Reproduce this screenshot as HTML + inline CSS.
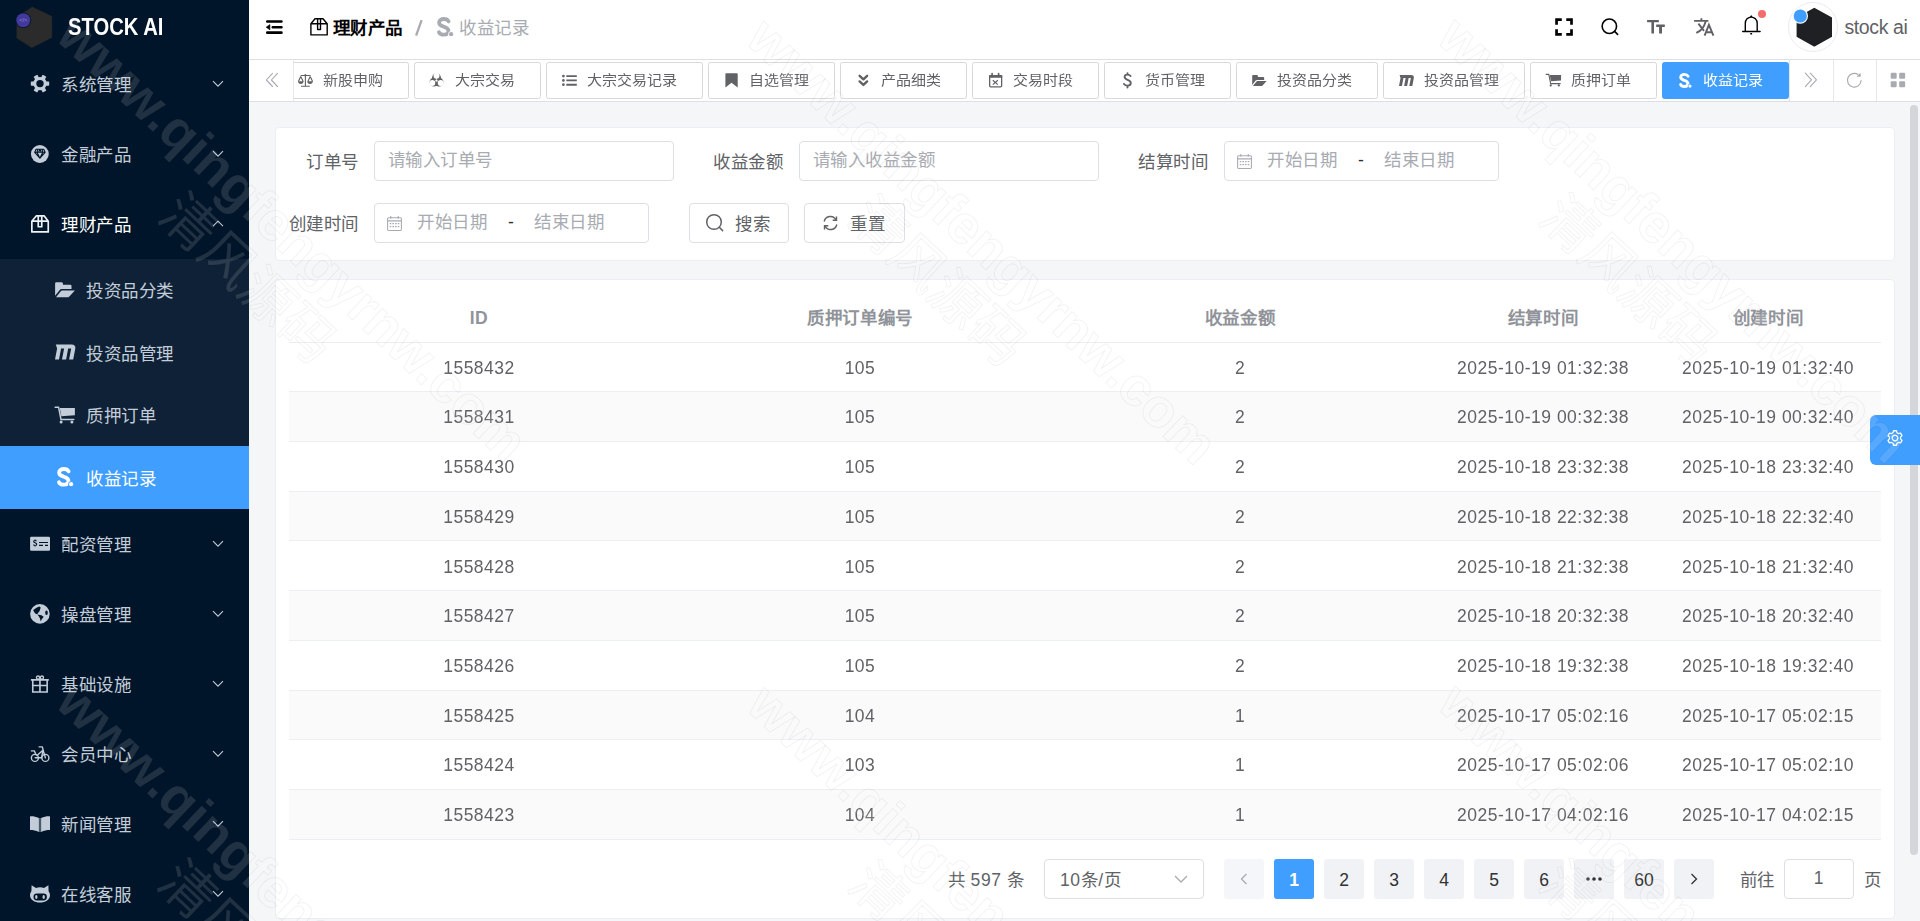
<!DOCTYPE html><html lang="zh-CN"><head><meta charset="utf-8"><title>收益记录</title><style>
*{box-sizing:border-box;margin:0;padding:0}
html,body{width:1920px;height:921px;overflow:hidden;background:#f5f6f8;font-family:"Liberation Sans",sans-serif;}
.abs{position:absolute}
.t{position:absolute;white-space:nowrap;line-height:1;letter-spacing:0.6px;font-weight:350}
svg{display:block}
</style></head><body>
<div class="abs" style="left:0;top:0;width:249px;height:921px;background:#001529;overflow:hidden">
<svg class="abs" style="left:0px;top:0px;overflow:visible" width="60" height="52" viewBox="0 0 60 52"><path d="M32.3 7.2 51.7 16.4V37.4L31.8 47.5 17 38V17.2Z" fill="#2b2b2b" stroke="#2b2b2b" stroke-width="0.8" stroke-linejoin="round"/><circle cx="23.3" cy="20.2" r="7.8" fill="#001529"/><circle cx="23.3" cy="20.2" r="7" fill="#43399c"/><text x="23.3" y="22.2" font-size="5.5" fill="#9a94d8" text-anchor="middle" font-family="Liberation Sans">&lt;/&gt;</text></svg>
<div class="t" style="left:68px;top:15.5px;font-size:23.5px;font-weight:bold;color:#fff;letter-spacing:0;transform:scaleX(0.86);transform-origin:0 0">STOCK AI</div>
<svg class="abs" style="left:28px;top:72px;overflow:visible" width="24" height="24" viewBox="0 0 24 24"><rect x="-2.1" y="-9.2" width="4.2" height="4.5" rx="0.6" transform="translate(12 11.6) rotate(90)" fill="#c3cdd9"/><rect x="-2.1" y="-9.2" width="4.2" height="4.5" rx="0.6" transform="translate(12 11.6) rotate(150)" fill="#c3cdd9"/><rect x="-2.1" y="-9.2" width="4.2" height="4.5" rx="0.6" transform="translate(12 11.6) rotate(210)" fill="#c3cdd9"/><rect x="-2.1" y="-9.2" width="4.2" height="4.5" rx="0.6" transform="translate(12 11.6) rotate(270)" fill="#c3cdd9"/><rect x="-2.1" y="-9.2" width="4.2" height="4.5" rx="0.6" transform="translate(12 11.6) rotate(330)" fill="#c3cdd9"/><rect x="-2.1" y="-9.2" width="4.2" height="4.5" rx="0.6" transform="translate(12 11.6) rotate(390)" fill="#c3cdd9"/><path fill="#c3cdd9" fill-rule="evenodd" d="M12 4.9A6.7 6.7 0 1 1 12 18.3 6.7 6.7 0 1 1 12 4.9ZM12 7.9A3.7 3.7 0 1 0 12 15.3 3.7 3.7 0 1 0 12 7.9Z"/></svg>
<div class="t" style="left:61px;top:77.4px;font-size:17.5px;color:#c3cdd9;">系统管理</div>
<svg class="abs" style="left:211.5px;top:79.8px;overflow:visible" width="12" height="8" viewBox="0 0 12 8"><path d="M1 1.2 6 6.2 11 1.2" fill="none" stroke="#c3cdd9" stroke-width="1.1"/></svg>
<svg class="abs" style="left:28px;top:142px;overflow:visible" width="24" height="24" viewBox="0 0 24 24"><circle cx="11.85" cy="12" r="8.9" fill="#c3cdd9"/><path d="M8.1 7.2H15.7L17.1 10.3 11.9 16.2 6.7 10.3Z M6.7 10.3H17.1 M9.8 7.2 9 10.3 11.9 16.2 14.8 10.3 14 7.2 M11.9 7.2 10.6 10.3 M11.9 7.2 13.2 10.3" fill="none" stroke="#001529" stroke-width="1.1" stroke-linejoin="round"/></svg>
<div class="t" style="left:61px;top:147.4px;font-size:17.5px;color:#c3cdd9;">金融产品</div>
<svg class="abs" style="left:211.5px;top:149.8px;overflow:visible" width="12" height="8" viewBox="0 0 12 8"><path d="M1 1.2 6 6.2 11 1.2" fill="none" stroke="#c3cdd9" stroke-width="1.1"/></svg>
<svg class="abs" style="left:28px;top:212px;overflow:visible" width="24" height="24" viewBox="0 0 24 24"><path d="M8.2 3.95H16.3L20.25 9.2V19.95H3.85V9.2Z M3.85 9.2H20.25 M10.25 3.95V14.75H13.75V3.95" fill="none" stroke="#eef1f5" stroke-width="1.7" stroke-linejoin="round"/></svg>
<div class="t" style="left:61px;top:217.4px;font-size:17.5px;color:#fff;">理财产品</div>
<svg class="abs" style="left:211.5px;top:219.8px;overflow:visible" width="12" height="8" viewBox="0 0 12 8"><path d="M1 6.2 6 1.2 11 6.2" fill="none" stroke="#c3cdd9" stroke-width="1.1"/></svg>
<div class="abs" style="left:0;top:259px;width:249px;height:250px;background:#0e2136"></div>
<div class="abs" style="left:0;top:446px;width:249px;height:62.6px;background:#409eff"></div>
<svg class="abs" style="left:52px;top:278px;overflow:visible" width="26" height="26" viewBox="0 0 26 26"><path fill="#c3cdd9" d="M3.1 5.4Q3.1 4.2 4.3 4.2H9.6Q10.7 4.2 10.9 5.5L11 6.8H18.2Q19.5 6.8 19.5 8.1V11.1H9.8Q8.3 11.1 7.3 12.4L3.1 17.8Z"/><path fill="#c3cdd9" d="M4 19.2L9 13Q9.5 12.4 10.2 12.4H22.9L17.3 18.6Q16.8 19.2 16 19.2Z"/></svg>
<div class="t" style="left:86px;top:283.4px;font-size:17.5px;color:#c3cdd9;">投资品分类</div>
<svg class="abs" style="left:52px;top:340px;overflow:visible" width="26" height="26" viewBox="0 0 26 26"><path fill="#c3cdd9" d="M3.8 4.5H19.6C22.4 4.5 23.8 6.2 23.3 8.6L21.2 19.5H17.1L19.2 8.5H16.2L14.1 19.5H10L12.1 8.5H9.1L7 19.5H3L5.1 8.5Z"/></svg>
<div class="t" style="left:86px;top:345.9px;font-size:17.5px;color:#c3cdd9;">投资品管理</div>
<svg class="abs" style="left:52px;top:402px;overflow:visible" width="26" height="26" viewBox="0 0 26 26"><path d="M3.1 5.2H6.6L9 17.5H21.8" fill="none" stroke="#c3cdd9" stroke-width="1.5" stroke-linecap="round" stroke-linejoin="round"/><path fill="#c3cdd9" d="M7.8 5.9H22.9V13.2L9.4 14.2Z"/><circle cx="9.1" cy="19.9" r="1.5" fill="#c3cdd9"/><circle cx="19.9" cy="19.9" r="1.5" fill="#c3cdd9"/></svg>
<div class="t" style="left:86px;top:408.4px;font-size:17.5px;color:#c3cdd9;">质押订单</div>
<svg class="abs" style="left:52px;top:464px;overflow:visible" width="26" height="26" viewBox="0 0 26 26"><path d="M16.6 7.4C15.7 5.8 13.9 5 11.9 5 9.1 5 7.1 6.5 7.1 8.7 7.1 11.1 9.4 11.9 11.9 12.7 14.5 13.5 16.5 14.6 16.5 17 16.5 19.5 14.3 20.7 11.7 20.7 9.6 20.7 7.8 19.9 7 18.3" fill="none" stroke="#fff" stroke-width="3.8" stroke-linecap="round"/><circle cx="19.1" cy="20.2" r="2.9" fill="#409eff"/><circle cx="19.1" cy="20.2" r="2.1" fill="#fff"/></svg>
<div class="t" style="left:86px;top:470.9px;font-size:17.5px;color:#fff;">收益记录</div>
<svg class="abs" style="left:28px;top:532px;overflow:visible" width="24" height="24" viewBox="0 0 24 24"><rect x="2.1" y="4.8" width="19.9" height="13.95" rx="1.2" fill="#c3cdd9"/><path d="M8.6 9.2C8.2 8.7 7.6 8.5 7 8.5 6.2 8.5 5.6 8.9 5.6 9.6 5.6 11.1 8.7 10.5 8.7 12.3 8.7 13 8 13.5 7.1 13.5 6.4 13.5 5.8 13.2 5.4 12.7 M7.1 7.6V8.5 M7.1 13.5V14.4" fill="none" stroke="#001529" stroke-width="1.1"/><path d="M11 10.5H20 M11 13.4H15 M17 13.4H20" stroke="#001529" stroke-width="1.1"/></svg>
<div class="t" style="left:61px;top:537.4px;font-size:17.5px;color:#c3cdd9;">配资管理</div>
<svg class="abs" style="left:211.5px;top:539.8px;overflow:visible" width="12" height="8" viewBox="0 0 12 8"><path d="M1 1.2 6 6.2 11 1.2" fill="none" stroke="#c3cdd9" stroke-width="1.1"/></svg>
<svg class="abs" style="left:28px;top:602px;overflow:visible" width="24" height="24" viewBox="0 0 24 24"><circle cx="11.9" cy="11.9" r="9.8" fill="#c3cdd9"/><path fill="#001529" d="M5.2 8.6C6.5 6.6 8.6 5.2 11.4 4.4L12.7 5.4 11.6 8.9 10.4 10.6 9.2 12.2 7.2 11.4Z"/><path fill="#001529" d="M9.3 12.4 13.4 13.2 15.7 14.8 13.8 17.3 12.7 19.6 12 16.6 10.8 14.2Z"/><ellipse cx="18.5" cy="10.8" rx="1.3" ry="2.2" fill="#001529"/></svg>
<div class="t" style="left:61px;top:607.4px;font-size:17.5px;color:#c3cdd9;">操盘管理</div>
<svg class="abs" style="left:211.5px;top:609.8px;overflow:visible" width="12" height="8" viewBox="0 0 12 8"><path d="M1 1.2 6 6.2 11 1.2" fill="none" stroke="#c3cdd9" stroke-width="1.1"/></svg>
<svg class="abs" style="left:28px;top:672px;overflow:visible" width="24" height="24" viewBox="0 0 24 24"><path d="M4.75 8.3V20.05H19.15V8.3 M2.9 7.9H20.8 M11.95 7.9V20.05 M4.75 13.5H19.15" fill="none" stroke="#c3cdd9" stroke-width="1.6"/><circle cx="10" cy="5.6" r="1.6" fill="none" stroke="#c3cdd9" stroke-width="1.3"/><circle cx="13.9" cy="5.6" r="1.6" fill="none" stroke="#c3cdd9" stroke-width="1.3"/></svg>
<div class="t" style="left:61px;top:677.4px;font-size:17.5px;color:#c3cdd9;">基础设施</div>
<svg class="abs" style="left:211.5px;top:679.8px;overflow:visible" width="12" height="8" viewBox="0 0 12 8"><path d="M1 1.2 6 6.2 11 1.2" fill="none" stroke="#c3cdd9" stroke-width="1.1"/></svg>
<svg class="abs" style="left:28px;top:742px;overflow:visible" width="24" height="24" viewBox="0 0 24 24"><circle cx="6.9" cy="15.9" r="3.5" fill="none" stroke="#c3cdd9" stroke-width="1.4"/><circle cx="17.4" cy="15.9" r="3.5" fill="none" stroke="#c3cdd9" stroke-width="1.4"/><path d="M7.2 15.7H13.6L14.8 9.2 M9 13.5 14.6 8.4 M11.1 4.9H14.3L15.6 9.8 17.4 15.9 M3.4 8.9H6.3L7.9 12.5" fill="none" stroke="#c3cdd9" stroke-width="1.4" stroke-linecap="round" stroke-linejoin="round"/></svg>
<div class="t" style="left:61px;top:747.4px;font-size:17.5px;color:#c3cdd9;">会员中心</div>
<svg class="abs" style="left:211.5px;top:749.8px;overflow:visible" width="12" height="8" viewBox="0 0 12 8"><path d="M1 1.2 6 6.2 11 1.2" fill="none" stroke="#c3cdd9" stroke-width="1.1"/></svg>
<svg class="abs" style="left:28px;top:812px;overflow:visible" width="24" height="24" viewBox="0 0 24 24"><path fill="#c3cdd9" d="M2 4.4C4.6 4.1 7.5 4.6 10.9 6.1V19.9C7.6 18.5 4.6 18 2 18.1Z"/><path fill="#c3cdd9" d="M22 4.4C19.4 4.1 16.5 4.6 13.1 6.1V19.9C16.4 18.5 19.4 18 22 18.1Z"/><rect x="10.9" y="6" width="2.2" height="14" fill="#c3cdd9" opacity="0.38"/></svg>
<div class="t" style="left:61px;top:817.4px;font-size:17.5px;color:#c3cdd9;">新闻管理</div>
<svg class="abs" style="left:211.5px;top:819.8px;overflow:visible" width="12" height="8" viewBox="0 0 12 8"><path d="M1 1.2 6 6.2 11 1.2" fill="none" stroke="#c3cdd9" stroke-width="1.1"/></svg>
<svg class="abs" style="left:28px;top:882px;overflow:visible" width="24" height="24" viewBox="0 0 24 24"><path fill="#c3cdd9" d="M3.6 3.2 8 5.9C9.2 5.5 10.5 5.3 12 5.3S14.8 5.5 16 5.9L20.4 3.2 20.6 9.2C21.5 10.4 22 11.8 22 13.2 22 17.6 17.5 20.6 12 20.6S2 17.6 2 13.2C2 11.8 2.5 10.4 3.4 9.2Z"/><rect x="5.5" y="11.6" width="13.4" height="6.8" rx="3.4" fill="#001529"/><ellipse cx="8.3" cy="15" rx="1.2" ry="2" fill="#c3cdd9"/><ellipse cx="15.7" cy="15" rx="1.2" ry="2" fill="#c3cdd9"/></svg>
<div class="t" style="left:61px;top:887.4px;font-size:17.5px;color:#c3cdd9;">在线客服</div>
<svg class="abs" style="left:211.5px;top:889.8px;overflow:visible" width="12" height="8" viewBox="0 0 12 8"><path d="M1 1.2 6 6.2 11 1.2" fill="none" stroke="#c3cdd9" stroke-width="1.1"/></svg>
</div>
<div class="abs" style="left:249px;top:0;width:1671px;height:60px;background:#fff;border-bottom:1px solid #dcdfe6"></div>
<svg class="abs" style="left:262px;top:15px;overflow:visible" width="26" height="26" viewBox="0 0 26 26"><path d="M5.3 6.45H19.45 M10.8 12.2H19.45 M5.3 17.65H19.45" stroke="#000" stroke-width="2.65" stroke-linecap="round"/><path d="M4.2 12.2 7.9 9.6V14.8Z" fill="#000" stroke="#000" stroke-width="0.6" stroke-linejoin="round"/></svg>
<svg class="abs" style="left:306px;top:14px;overflow:visible" width="26" height="26" viewBox="0 0 26 26"><path d="M9 4.7H17L21.2 9.8V20.9H4.9V9.8Z M4.9 9.8H21.2 M11.6 4.7V15.5H14.5V4.7" fill="none" stroke="#000" stroke-width="1.4" stroke-linejoin="round"/></svg>
<div class="t" style="left:332.5px;top:19.8px;font-size:17.5px;color:#000;font-weight:bold">理财产品</div>
<svg class="abs" style="left:406px;top:14px;overflow:visible" width="26" height="26" viewBox="0 0 26 26"><path d="M15.6 6.1 10.1 21.7" stroke="#a8abb2" stroke-width="2.3"/></svg>
<svg class="abs" style="left:432.1px;top:14px;overflow:visible" width="26" height="26" viewBox="0 0 26 26"><path d="M16.6 7.4C15.7 5.8 13.9 5 11.9 5 9.1 5 7.1 6.5 7.1 8.7 7.1 11.1 9.4 11.9 11.9 12.7 14.5 13.5 16.5 14.6 16.5 17 16.5 19.5 14.3 20.7 11.7 20.7 9.6 20.7 7.8 19.9 7 18.3" fill="none" stroke="#a8abb2" stroke-width="3.8" stroke-linecap="round"/><circle cx="19.1" cy="20.2" r="2.9" fill="#fff"/><circle cx="19.1" cy="20.2" r="2.1" fill="#a8abb2"/></svg>
<div class="t" style="left:459px;top:19.8px;font-size:17.5px;color:#a8abb2;">收益记录</div>
<svg class="abs" style="left:1552px;top:14px;overflow:visible" width="24" height="24" viewBox="0 0 24 24"><path d="M4.55 9.35V5.55H8.45 M15.65 5.55H19.5V9.35 M4.55 16.55V20.45H8.45 M15.65 20.45H19.5V16.55" fill="none" stroke="#000" stroke-width="2.7" stroke-linecap="square"/></svg>
<svg class="abs" style="left:1598px;top:14px;overflow:visible" width="24" height="24" viewBox="0 0 24 24"><circle cx="11.35" cy="12.25" r="7.2" fill="none" stroke="#000" stroke-width="1.6"/><path d="M16.6 17.4 19.6 20.4" stroke="#000" stroke-width="1.6" stroke-linecap="round"/></svg>
<svg class="abs" style="left:1644px;top:14px;overflow:visible" width="24" height="24" viewBox="0 0 24 24"><path fill="#5f6166" d="M3.1 6.2Q3.1 5.9 3.4 5.9H14.5Q14.85 5.9 14.85 6.2V8.3H10V19.5H7.4V8.3H3.1Z"/><path fill="#5f6166" d="M12.2 10.4H20.8V12.9H18V19.5H15.1V12.9H12.2Z"/></svg>
<svg class="abs" style="left:1692px;top:14px;overflow:visible" width="24" height="24" viewBox="0 0 24 24"><path d="M9.4 4.2V6.9 M2.1 6.9H16.4 M6.4 9.6 12 16.8 M13.6 7.4C12.3 12.6 9.4 16.8 4.3 18.8 M12.6 21.7 16.9 10.8 21.4 21.7 M14.2 18.3H19.8" fill="none" stroke="#5f6166" stroke-width="1.9"/></svg>
<svg class="abs" style="left:1738px;top:6px;overflow:visible" width="32" height="32" viewBox="0 0 32 32"><path d="M7.3 25.5V17.5C7.3 13.6 10 11.1 13.2 11.1 16.4 11.1 19.2 13.6 19.2 17.5V25.5 M4.7 25.5H22.1" fill="none" stroke="#000" stroke-width="1.4" stroke-linecap="round"/><path d="M11.9 11 13.2 9.1 14.5 11Z" fill="#000"/><rect x="12.2" y="27.1" width="2" height="1.5" rx="0.5" fill="#000"/></svg>
<div class="abs" style="left:1758px;top:10px;width:8px;height:8px;border-radius:50%;background:#f56c6c"></div>
<div class="abs" style="left:1788px;top:2px;width:50px;height:50px;border-radius:50%;border:1px solid #e9ecf1;background:#fff"></div>
<svg class="abs" style="left:1796px;top:7px;overflow:visible" width="37" height="40" viewBox="0 0 37 40"><path d="M18.3 1.6 35.2 11v18.4L18.3 38.8 1.4 29.4V11z" fill="#1f2023" stroke="#1f2023" stroke-width="1.6" stroke-linejoin="round"/><circle cx="4.3" cy="9" r="7.7" fill="#fff"/><circle cx="4.3" cy="9" r="6.6" fill="#409eff"/></svg>
<div class="t" style="left:1844.5px;top:18.3px;font-size:19.5px;color:#606266;letter-spacing:-0.4px">stock ai</div>
<div class="abs" style="left:249px;top:60px;width:1671px;height:42px;background:#fff;border-bottom:1px solid #dcdfe6"></div>
<div class="abs" style="left:293px;top:60px;width:1px;height:41px;background:#e4e7ed"></div>
<svg class="abs" style="left:259px;top:68px;overflow:visible" width="24" height="24" viewBox="0 0 24 24"><path d="M13.5 5.3 7.4 12 13.5 18.5 M18.5 5.3 12.4 12 18.5 18.5" fill="none" stroke="#a8abb2" stroke-width="1.1" stroke-linecap="round" stroke-linejoin="round"/></svg>
<div class="abs" style="left:294px;top:60px;width:1495px;height:41px;overflow:hidden">
<div class="abs" style="left:-12px;top:2px;width:127px;height:37px;background:#fff;border:1px solid #d8d8d8;border-radius:2.5px"></div>
<svg class="abs" style="left:1px;top:8px;overflow:visible" width="24" height="24" viewBox="0 0 24 24"><path d="M5.7 7.5H15.6 M10.4 6.6V18 M5.9 18.2H14.8 M5.7 8.6 3.4 13.6 M5.7 8.6 8.2 13.6 M15.2 8.6 12.9 13.6 M15.2 8.6 17.6 13.6" fill="none" stroke="#606266" stroke-width="1.1"/><circle cx="10.4" cy="7.4" r="1.1" fill="#606266"/><path fill="#606266" d="M3 13.3H8.6C8.6 14.9 7.4 15.9 5.8 15.9S3 14.9 3 13.3Z M12.2 13.3H17.9C17.9 14.9 16.6 15.9 15 15.9S12.2 14.9 12.2 13.3Z"/></svg>
<div class="t" style="left:28.5px;top:14.3px;font-size:15px;color:#606266;letter-spacing:0;transform:scaleY(0.88);transform-origin:0 0">新股申购</div>
<div class="abs" style="left:120px;top:2px;width:127px;height:37px;background:#fff;border:1px solid #d8d8d8;border-radius:2.5px"></div>
<svg class="abs" style="left:131px;top:8px;overflow:visible" width="24" height="24" viewBox="0 0 24 24"><defs><mask id="bio" maskUnits="userSpaceOnUse" x="0" y="0" width="24" height="24"><rect width="24" height="24" fill="white"/><circle cx="11.50" cy="7.70" r="3.0" fill="black"/><circle cx="15.74" cy="15.05" r="3.0" fill="black"/><circle cx="7.26" cy="15.05" r="3.0" fill="black"/><circle cx="11.5" cy="12.6" r="1.1" fill="black"/><path d="M11.50 11.60L11.50 9.40" stroke="black" stroke-width="0.6"/><path d="M12.37 13.10L14.27 14.20" stroke="black" stroke-width="0.6"/><path d="M10.63 13.10L8.73 14.20" stroke="black" stroke-width="0.6"/></mask></defs><g mask="url(#bio)" fill="#606266"><circle cx="11.50" cy="9.60" r="4.4"/><circle cx="14.10" cy="14.10" r="4.4"/><circle cx="8.90" cy="14.10" r="4.4"/><circle cx="11.5" cy="12.6" r="2.6"/></g></svg>
<div class="t" style="left:160.5px;top:14.3px;font-size:15px;color:#606266;letter-spacing:0;transform:scaleY(0.88);transform-origin:0 0">大宗交易</div>
<div class="abs" style="left:252px;top:2px;width:157px;height:37px;background:#fff;border:1px solid #d8d8d8;border-radius:2.5px"></div>
<svg class="abs" style="left:263px;top:8px;overflow:visible" width="24" height="24" viewBox="0 0 24 24"><circle cx="6.4" cy="8.1" r="1.35" fill="#606266"/><circle cx="6.4" cy="12.4" r="1.35" fill="#606266"/><circle cx="6.4" cy="16.7" r="1.35" fill="#606266"/><path d="M9.3 8.1H19.8 M9.3 12.4H19.8 M9.3 16.7H19.8" stroke="#606266" stroke-width="1.9"/></svg>
<div class="t" style="left:292.5px;top:14.3px;font-size:15px;color:#606266;letter-spacing:0;transform:scaleY(0.88);transform-origin:0 0">大宗交易记录</div>
<div class="abs" style="left:414px;top:2px;width:127px;height:37px;background:#fff;border:1px solid #d8d8d8;border-radius:2.5px"></div>
<svg class="abs" style="left:425px;top:8px;overflow:visible" width="24" height="24" viewBox="0 0 24 24"><path fill="#606266" d="M6.4 6.1Q6.4 5.2 7.3 5.2H17.8Q18.7 5.2 18.7 6.1V19.5L12.5 14.8 6.4 19.5Z"/></svg>
<div class="t" style="left:454.5px;top:14.3px;font-size:15px;color:#606266;letter-spacing:0;transform:scaleY(0.88);transform-origin:0 0">自选管理</div>
<div class="abs" style="left:546px;top:2px;width:127px;height:37px;background:#fff;border:1px solid #d8d8d8;border-radius:2.5px"></div>
<svg class="abs" style="left:557px;top:8px;overflow:visible" width="24" height="24" viewBox="0 0 24 24"><path d="M8.6 7.8 12.4 11.3 16.1 7.8 M8.6 13.4 12.4 16.9 16.1 13.4" fill="none" stroke="#606266" stroke-width="2.4" stroke-linecap="round" stroke-linejoin="round"/></svg>
<div class="t" style="left:586.5px;top:14.3px;font-size:15px;color:#606266;letter-spacing:0;transform:scaleY(0.88);transform-origin:0 0">产品细类</div>
<div class="abs" style="left:678px;top:2px;width:127px;height:37px;background:#fff;border:1px solid #d8d8d8;border-radius:2.5px"></div>
<svg class="abs" style="left:689px;top:8px;overflow:visible" width="24" height="24" viewBox="0 0 24 24"><rect x="6.65" y="7.65" width="12" height="11.2" rx="1" fill="none" stroke="#606266" stroke-width="1.3"/><rect x="6" y="7" width="13.3" height="2.8" rx="0.8" fill="#606266"/><path d="M9.1 5.6V8.6 M15.6 5.6V8.6" stroke="#606266" stroke-width="1.7" stroke-linecap="round"/><path d="M9.8 12.2 14.8 16.6 M14.8 12.2 9.8 16.6" stroke="#606266" stroke-width="1.2"/></svg>
<div class="t" style="left:718.5px;top:14.3px;font-size:15px;color:#606266;letter-spacing:0;transform:scaleY(0.88);transform-origin:0 0">交易时段</div>
<div class="abs" style="left:810px;top:2px;width:127px;height:37px;background:#fff;border:1px solid #d8d8d8;border-radius:2.5px"></div>
<svg class="abs" style="left:821px;top:8px;overflow:visible" width="24" height="24" viewBox="0 0 24 24"><path d="M15.6 8C14.9 7.1 13.8 6.6 12.5 6.6 10.7 6.6 9.6 7.6 9.6 9 9.6 12.3 15.8 11.4 15.8 15 15.8 16.5 14.5 17.6 12.5 17.6 11 17.6 9.7 17 9 15.9 M12.5 5.2V6.6 M12.5 17.6V19.5" fill="none" stroke="#606266" stroke-width="1.9" stroke-linecap="round"/></svg>
<div class="t" style="left:850.5px;top:14.3px;font-size:15px;color:#606266;letter-spacing:0;transform:scaleY(0.88);transform-origin:0 0">货币管理</div>
<div class="abs" style="left:942px;top:2px;width:142px;height:37px;background:#fff;border:1px solid #d8d8d8;border-radius:2.5px"></div>
<svg class="abs" style="left:953px;top:8px;overflow:visible" width="24" height="24" viewBox="0 0 24 24"><g transform="translate(2.94 3.93) scale(0.73)"><path fill="#606266" d="M3.1 5.4Q3.1 4.2 4.3 4.2H9.6Q10.7 4.2 10.9 5.5L11 6.8H18.2Q19.5 6.8 19.5 8.1V11.1H9.8Q8.3 11.1 7.3 12.4L3.1 17.8Z"/><path fill="#606266" d="M4 19.2L9 13Q9.5 12.4 10.2 12.4H22.9L17.3 18.6Q16.8 19.2 16 19.2Z"/></g></svg>
<div class="t" style="left:982.5px;top:14.3px;font-size:15px;color:#606266;letter-spacing:0;transform:scaleY(0.88);transform-origin:0 0">投资品分类</div>
<div class="abs" style="left:1089px;top:2px;width:142px;height:37px;background:#fff;border:1px solid #d8d8d8;border-radius:2.5px"></div>
<svg class="abs" style="left:1100px;top:8px;overflow:visible" width="24" height="24" viewBox="0 0 24 24"><g transform="translate(2.81 3.8) scale(0.73)"><path fill="#606266" d="M3.8 4.5H19.6C22.4 4.5 23.8 6.2 23.3 8.6L21.2 19.5H17.1L19.2 8.5H16.2L14.1 19.5H10L12.1 8.5H9.1L7 19.5H3L5.1 8.5Z"/></g></svg>
<div class="t" style="left:1129.5px;top:14.3px;font-size:15px;color:#606266;letter-spacing:0;transform:scaleY(0.88);transform-origin:0 0">投资品管理</div>
<div class="abs" style="left:1236px;top:2px;width:127px;height:37px;background:#fff;border:1px solid #d8d8d8;border-radius:2.5px"></div>
<svg class="abs" style="left:1247px;top:8px;overflow:visible" width="24" height="24" viewBox="0 0 24 24"><g transform="translate(2.88 2.5) scale(0.75)"><path d="M3.1 5.2H6.6L9 17.5H21.8" fill="none" stroke="#606266" stroke-width="1.5" stroke-linecap="round" stroke-linejoin="round"/><path fill="#606266" d="M7.8 5.9H22.9V13.2L9.4 14.2Z"/><circle cx="9.1" cy="19.9" r="1.5" fill="#606266"/><circle cx="19.9" cy="19.9" r="1.5" fill="#606266"/></g></svg>
<div class="t" style="left:1276.5px;top:14.3px;font-size:15px;color:#606266;letter-spacing:0;transform:scaleY(0.88);transform-origin:0 0">质押订单</div>
<div class="abs" style="left:1368px;top:2px;width:127px;height:37px;background:#409eff;border:1px solid #409eff;border-radius:2.5px"></div>
<svg class="abs" style="left:1379px;top:8px;overflow:visible" width="24" height="24" viewBox="0 0 24 24"><g transform="translate(2.25 2.56) scale(0.77)"><path d="M16.6 7.4C15.7 5.8 13.9 5 11.9 5 9.1 5 7.1 6.5 7.1 8.7 7.1 11.1 9.4 11.9 11.9 12.7 14.5 13.5 16.5 14.6 16.5 17 16.5 19.5 14.3 20.7 11.7 20.7 9.6 20.7 7.8 19.9 7 18.3" fill="none" stroke="#fff" stroke-width="3.8" stroke-linecap="round"/><circle cx="19.1" cy="20.2" r="2.9" fill="#409eff"/><circle cx="19.1" cy="20.2" r="2.1" fill="#fff"/></g></svg>
<div class="t" style="left:1408.5px;top:14.3px;font-size:15px;color:#fff;letter-spacing:0;transform:scaleY(0.88);transform-origin:0 0">收益记录</div>
</div>
<div class="abs" style="left:1789px;top:60px;width:1px;height:41px;background:#e4e7ed"></div>
<div class="abs" style="left:1833px;top:60px;width:1px;height:41px;background:#e4e7ed"></div>
<div class="abs" style="left:1876px;top:60px;width:1px;height:41px;background:#e4e7ed"></div>
<svg class="abs" style="left:1799px;top:68px;overflow:visible" width="24" height="24" viewBox="0 0 24 24"><path d="M6.3 5.2 12.5 11.8 6.3 18.6 M11.3 5.2 17.5 11.8 11.3 18.6" fill="none" stroke="#a8abb2" stroke-width="1.1" stroke-linecap="round" stroke-linejoin="round"/></svg>
<svg class="abs" style="left:1842px;top:68px;overflow:visible" width="24" height="24" viewBox="0 0 24 24"><path d="M19.1 12.3A6.85 6.85 0 1 1 16.3 6.8" fill="none" stroke="#a8abb2" stroke-width="1.2"/><path d="M14.5 8.7H18.7V4.8Z" fill="#a8abb2"/></svg>
<svg class="abs" style="left:1886px;top:68px;overflow:visible" width="24" height="24" viewBox="0 0 24 24"><rect x="4.7" y="4.7" width="5.95" height="5.95" rx="1" fill="#a8abb2"/><rect x="4.7" y="13.2" width="5.95" height="5.95" rx="1" fill="#a8abb2"/><rect x="13.2" y="4.7" width="5.95" height="5.95" rx="1" fill="#a8abb2"/><rect x="13.2" y="13.2" width="5.95" height="5.95" rx="1" fill="#a8abb2"/></svg>
<div class="abs" style="left:275px;top:127px;width:1620px;height:134px;background:#fff;border:1px solid #ebeef5;border-radius:4px"></div>
<div class="t" style="left:159px;width:200px;text-align:right;top:154px;font-size:17.5px;color:#606266">订单号</div>
<div class="abs" style="left:374px;top:141px;width:300px;height:40px;border:1px solid #dcdfe6;border-radius:4px;background:#fff"></div>
<div class="t" style="left:387.5px;top:151.7px;font-size:17.5px;color:#a8abb2;">请输入订单号</div>
<div class="t" style="left:583.6px;width:200px;text-align:right;top:154px;font-size:17.5px;color:#606266">收益金额</div>
<div class="abs" style="left:799px;top:141px;width:300px;height:40px;border:1px solid #dcdfe6;border-radius:4px;background:#fff"></div>
<div class="t" style="left:812.5px;top:151.7px;font-size:17.5px;color:#a8abb2;">请输入收益金额</div>
<div class="t" style="left:1008.5px;width:200px;text-align:right;top:154px;font-size:17.5px;color:#606266">结算时间</div>
<div class="abs" style="left:1224px;top:141px;width:275px;height:40px;border:1px solid #dcdfe6;border-radius:4px;background:#fff"></div>
<svg class="abs" style="left:1236px;top:152.5px" width="17" height="17" viewBox="0 0 16 16"><rect x="1.5" y="2.5" width="13" height="12" rx="1" fill="none" stroke="#a8abb2" stroke-width="1"/><path d="M1.5 5.5h13 M4.5 1v2.5 M11.5 1v2.5" stroke="#a8abb2" stroke-width="1"/><g fill="#a8abb2"><rect x="3.5" y="7.5" width="1.5" height="1.2"/><rect x="6" y="7.5" width="1.5" height="1.2"/><rect x="8.5" y="7.5" width="1.5" height="1.2"/><rect x="11" y="7.5" width="1.5" height="1.2"/><rect x="3.5" y="10.3" width="1.5" height="1.2"/><rect x="6" y="10.3" width="1.5" height="1.2"/><rect x="8.5" y="10.3" width="1.5" height="1.2"/><rect x="11" y="10.3" width="1.5" height="1.2"/></g></svg>
<div class="t" style="left:1267px;top:151.7px;font-size:17.5px;color:#a8abb2;">开始日期</div>
<div class="t" style="left:1358px;top:152.2px;font-size:17.5px;color:#303133;">-</div>
<div class="t" style="left:1384px;top:151.7px;font-size:17.5px;color:#a8abb2;">结束日期</div>
<div class="t" style="left:159px;width:200px;text-align:right;top:216px;font-size:17.5px;color:#606266">创建时间</div>
<div class="abs" style="left:374px;top:203px;width:275px;height:40px;border:1px solid #dcdfe6;border-radius:4px;background:#fff"></div>
<svg class="abs" style="left:386px;top:214.5px" width="17" height="17" viewBox="0 0 16 16"><rect x="1.5" y="2.5" width="13" height="12" rx="1" fill="none" stroke="#a8abb2" stroke-width="1"/><path d="M1.5 5.5h13 M4.5 1v2.5 M11.5 1v2.5" stroke="#a8abb2" stroke-width="1"/><g fill="#a8abb2"><rect x="3.5" y="7.5" width="1.5" height="1.2"/><rect x="6" y="7.5" width="1.5" height="1.2"/><rect x="8.5" y="7.5" width="1.5" height="1.2"/><rect x="11" y="7.5" width="1.5" height="1.2"/><rect x="3.5" y="10.3" width="1.5" height="1.2"/><rect x="6" y="10.3" width="1.5" height="1.2"/><rect x="8.5" y="10.3" width="1.5" height="1.2"/><rect x="11" y="10.3" width="1.5" height="1.2"/></g></svg>
<div class="t" style="left:417px;top:213.7px;font-size:17.5px;color:#a8abb2;">开始日期</div>
<div class="t" style="left:508px;top:214.2px;font-size:17.5px;color:#303133;">-</div>
<div class="t" style="left:534px;top:213.7px;font-size:17.5px;color:#a8abb2;">结束日期</div>
<div class="abs" style="left:689px;top:203px;width:100px;height:40px;border:1px solid #dcdfe6;border-radius:4px;background:#fff"></div>
<svg class="abs" style="left:705px;top:213px" width="19" height="19" viewBox="0 0 19 19"><circle cx="9" cy="9" r="7.3" fill="none" stroke="#606266" stroke-width="1.5"/><path d="M14.3 14.3 17.6 17.6" stroke="#606266" stroke-width="1.5" stroke-linecap="round"/></svg>
<div class="t" style="left:735px;top:216px;font-size:17.5px;color:#606266;">搜索</div>
<div class="abs" style="left:804px;top:203px;width:101px;height:40px;border:1px solid #dcdfe6;border-radius:4px;background:#fff"></div>
<svg class="abs" style="left:822px;top:215px" width="17" height="16" viewBox="0 0 17 16"><path d="M2.2 6.5A6.3 6.3 0 0 1 14 5 M14.8 9.5A6.3 6.3 0 0 1 3 11" fill="none" stroke="#606266" stroke-width="1.4"/><path d="M14.5 1.5V5.3H10.7 M2.5 14.5V10.7H6.3" fill="none" stroke="#606266" stroke-width="1.4"/></svg>
<div class="t" style="left:850px;top:216px;font-size:17.5px;color:#606266;">重置</div>
<div class="abs" style="left:275px;top:279px;width:1620px;height:640px;background:#fff;border:1px solid #ebeef5;border-radius:4px"></div>
<div class="t" style="left:329px;width:300px;text-align:center;top:309.5px;font-size:17.5px;font-weight:bold;color:#909399">ID</div>
<div class="t" style="left:710px;width:300px;text-align:center;top:309.5px;font-size:17.5px;font-weight:bold;color:#909399">质押订单编号</div>
<div class="t" style="left:1090px;width:300px;text-align:center;top:309.5px;font-size:17.5px;font-weight:bold;color:#909399">收益金额</div>
<div class="t" style="left:1393px;width:300px;text-align:center;top:309.5px;font-size:17.5px;font-weight:bold;color:#909399">结算时间</div>
<div class="t" style="left:1618px;width:300px;text-align:center;top:309.5px;font-size:17.5px;font-weight:bold;color:#909399">创建时间</div>
<div class="abs" style="left:288.8px;top:342px;width:1592px;height:1px;background:#ebeef5"></div>
<div class="abs" style="left:288.8px;top:391.22px;width:1592px;height:1px;background:#ebeef5"></div>
<div class="t" style="left:329px;width:300px;text-align:center;top:358.66px;font-size:17.5px;color:#606266;letter-spacing:0.5px;transform:scaleY(1.1)">1558432</div>
<div class="t" style="left:710px;width:300px;text-align:center;top:358.66px;font-size:17.5px;color:#606266;letter-spacing:0.5px;transform:scaleY(1.1)">105</div>
<div class="t" style="left:1090px;width:300px;text-align:center;top:358.66px;font-size:17.5px;color:#606266;letter-spacing:0.5px;transform:scaleY(1.1)">2</div>
<div class="t" style="left:1393px;width:300px;text-align:center;top:358.66px;font-size:17.5px;color:#606266;letter-spacing:0.5px;transform:scaleY(1.1)">2025-10-19 01:32:38</div>
<div class="t" style="left:1618px;width:300px;text-align:center;top:358.66px;font-size:17.5px;color:#606266;letter-spacing:0.5px;transform:scaleY(1.1)">2025-10-19 01:32:40</div>
<div class="abs" style="left:288.8px;top:392.22px;width:1592px;height:49.22px;background:#fafafa"></div>
<div class="abs" style="left:288.8px;top:440.94000000000005px;width:1592px;height:1px;background:#ebeef5"></div>
<div class="t" style="left:329px;width:300px;text-align:center;top:408.38000000000005px;font-size:17.5px;color:#606266;letter-spacing:0.5px;transform:scaleY(1.1)">1558431</div>
<div class="t" style="left:710px;width:300px;text-align:center;top:408.38000000000005px;font-size:17.5px;color:#606266;letter-spacing:0.5px;transform:scaleY(1.1)">105</div>
<div class="t" style="left:1090px;width:300px;text-align:center;top:408.38000000000005px;font-size:17.5px;color:#606266;letter-spacing:0.5px;transform:scaleY(1.1)">2</div>
<div class="t" style="left:1393px;width:300px;text-align:center;top:408.38000000000005px;font-size:17.5px;color:#606266;letter-spacing:0.5px;transform:scaleY(1.1)">2025-10-19 00:32:38</div>
<div class="t" style="left:1618px;width:300px;text-align:center;top:408.38000000000005px;font-size:17.5px;color:#606266;letter-spacing:0.5px;transform:scaleY(1.1)">2025-10-19 00:32:40</div>
<div class="abs" style="left:288.8px;top:490.65999999999997px;width:1592px;height:1px;background:#ebeef5"></div>
<div class="t" style="left:329px;width:300px;text-align:center;top:458.1px;font-size:17.5px;color:#606266;letter-spacing:0.5px;transform:scaleY(1.1)">1558430</div>
<div class="t" style="left:710px;width:300px;text-align:center;top:458.1px;font-size:17.5px;color:#606266;letter-spacing:0.5px;transform:scaleY(1.1)">105</div>
<div class="t" style="left:1090px;width:300px;text-align:center;top:458.1px;font-size:17.5px;color:#606266;letter-spacing:0.5px;transform:scaleY(1.1)">2</div>
<div class="t" style="left:1393px;width:300px;text-align:center;top:458.1px;font-size:17.5px;color:#606266;letter-spacing:0.5px;transform:scaleY(1.1)">2025-10-18 23:32:38</div>
<div class="t" style="left:1618px;width:300px;text-align:center;top:458.1px;font-size:17.5px;color:#606266;letter-spacing:0.5px;transform:scaleY(1.1)">2025-10-18 23:32:40</div>
<div class="abs" style="left:288.8px;top:491.65999999999997px;width:1592px;height:49.22px;background:#fafafa"></div>
<div class="abs" style="left:288.8px;top:540.38px;width:1592px;height:1px;background:#ebeef5"></div>
<div class="t" style="left:329px;width:300px;text-align:center;top:507.82px;font-size:17.5px;color:#606266;letter-spacing:0.5px;transform:scaleY(1.1)">1558429</div>
<div class="t" style="left:710px;width:300px;text-align:center;top:507.82px;font-size:17.5px;color:#606266;letter-spacing:0.5px;transform:scaleY(1.1)">105</div>
<div class="t" style="left:1090px;width:300px;text-align:center;top:507.82px;font-size:17.5px;color:#606266;letter-spacing:0.5px;transform:scaleY(1.1)">2</div>
<div class="t" style="left:1393px;width:300px;text-align:center;top:507.82px;font-size:17.5px;color:#606266;letter-spacing:0.5px;transform:scaleY(1.1)">2025-10-18 22:32:38</div>
<div class="t" style="left:1618px;width:300px;text-align:center;top:507.82px;font-size:17.5px;color:#606266;letter-spacing:0.5px;transform:scaleY(1.1)">2025-10-18 22:32:40</div>
<div class="abs" style="left:288.8px;top:590.1px;width:1592px;height:1px;background:#ebeef5"></div>
<div class="t" style="left:329px;width:300px;text-align:center;top:557.54px;font-size:17.5px;color:#606266;letter-spacing:0.5px;transform:scaleY(1.1)">1558428</div>
<div class="t" style="left:710px;width:300px;text-align:center;top:557.54px;font-size:17.5px;color:#606266;letter-spacing:0.5px;transform:scaleY(1.1)">105</div>
<div class="t" style="left:1090px;width:300px;text-align:center;top:557.54px;font-size:17.5px;color:#606266;letter-spacing:0.5px;transform:scaleY(1.1)">2</div>
<div class="t" style="left:1393px;width:300px;text-align:center;top:557.54px;font-size:17.5px;color:#606266;letter-spacing:0.5px;transform:scaleY(1.1)">2025-10-18 21:32:38</div>
<div class="t" style="left:1618px;width:300px;text-align:center;top:557.54px;font-size:17.5px;color:#606266;letter-spacing:0.5px;transform:scaleY(1.1)">2025-10-18 21:32:40</div>
<div class="abs" style="left:288.8px;top:591.1px;width:1592px;height:49.22px;background:#fafafa"></div>
<div class="abs" style="left:288.8px;top:639.82px;width:1592px;height:1px;background:#ebeef5"></div>
<div class="t" style="left:329px;width:300px;text-align:center;top:607.26px;font-size:17.5px;color:#606266;letter-spacing:0.5px;transform:scaleY(1.1)">1558427</div>
<div class="t" style="left:710px;width:300px;text-align:center;top:607.26px;font-size:17.5px;color:#606266;letter-spacing:0.5px;transform:scaleY(1.1)">105</div>
<div class="t" style="left:1090px;width:300px;text-align:center;top:607.26px;font-size:17.5px;color:#606266;letter-spacing:0.5px;transform:scaleY(1.1)">2</div>
<div class="t" style="left:1393px;width:300px;text-align:center;top:607.26px;font-size:17.5px;color:#606266;letter-spacing:0.5px;transform:scaleY(1.1)">2025-10-18 20:32:38</div>
<div class="t" style="left:1618px;width:300px;text-align:center;top:607.26px;font-size:17.5px;color:#606266;letter-spacing:0.5px;transform:scaleY(1.1)">2025-10-18 20:32:40</div>
<div class="abs" style="left:288.8px;top:689.54px;width:1592px;height:1px;background:#ebeef5"></div>
<div class="t" style="left:329px;width:300px;text-align:center;top:656.9799999999999px;font-size:17.5px;color:#606266;letter-spacing:0.5px;transform:scaleY(1.1)">1558426</div>
<div class="t" style="left:710px;width:300px;text-align:center;top:656.9799999999999px;font-size:17.5px;color:#606266;letter-spacing:0.5px;transform:scaleY(1.1)">105</div>
<div class="t" style="left:1090px;width:300px;text-align:center;top:656.9799999999999px;font-size:17.5px;color:#606266;letter-spacing:0.5px;transform:scaleY(1.1)">2</div>
<div class="t" style="left:1393px;width:300px;text-align:center;top:656.9799999999999px;font-size:17.5px;color:#606266;letter-spacing:0.5px;transform:scaleY(1.1)">2025-10-18 19:32:38</div>
<div class="t" style="left:1618px;width:300px;text-align:center;top:656.9799999999999px;font-size:17.5px;color:#606266;letter-spacing:0.5px;transform:scaleY(1.1)">2025-10-18 19:32:40</div>
<div class="abs" style="left:288.8px;top:690.54px;width:1592px;height:49.22px;background:#fafafa"></div>
<div class="abs" style="left:288.8px;top:739.26px;width:1592px;height:1px;background:#ebeef5"></div>
<div class="t" style="left:329px;width:300px;text-align:center;top:706.6999999999999px;font-size:17.5px;color:#606266;letter-spacing:0.5px;transform:scaleY(1.1)">1558425</div>
<div class="t" style="left:710px;width:300px;text-align:center;top:706.6999999999999px;font-size:17.5px;color:#606266;letter-spacing:0.5px;transform:scaleY(1.1)">104</div>
<div class="t" style="left:1090px;width:300px;text-align:center;top:706.6999999999999px;font-size:17.5px;color:#606266;letter-spacing:0.5px;transform:scaleY(1.1)">1</div>
<div class="t" style="left:1393px;width:300px;text-align:center;top:706.6999999999999px;font-size:17.5px;color:#606266;letter-spacing:0.5px;transform:scaleY(1.1)">2025-10-17 05:02:16</div>
<div class="t" style="left:1618px;width:300px;text-align:center;top:706.6999999999999px;font-size:17.5px;color:#606266;letter-spacing:0.5px;transform:scaleY(1.1)">2025-10-17 05:02:15</div>
<div class="abs" style="left:288.8px;top:788.98px;width:1592px;height:1px;background:#ebeef5"></div>
<div class="t" style="left:329px;width:300px;text-align:center;top:756.42px;font-size:17.5px;color:#606266;letter-spacing:0.5px;transform:scaleY(1.1)">1558424</div>
<div class="t" style="left:710px;width:300px;text-align:center;top:756.42px;font-size:17.5px;color:#606266;letter-spacing:0.5px;transform:scaleY(1.1)">103</div>
<div class="t" style="left:1090px;width:300px;text-align:center;top:756.42px;font-size:17.5px;color:#606266;letter-spacing:0.5px;transform:scaleY(1.1)">1</div>
<div class="t" style="left:1393px;width:300px;text-align:center;top:756.42px;font-size:17.5px;color:#606266;letter-spacing:0.5px;transform:scaleY(1.1)">2025-10-17 05:02:06</div>
<div class="t" style="left:1618px;width:300px;text-align:center;top:756.42px;font-size:17.5px;color:#606266;letter-spacing:0.5px;transform:scaleY(1.1)">2025-10-17 05:02:10</div>
<div class="abs" style="left:288.8px;top:789.98px;width:1592px;height:49.22px;background:#fafafa"></div>
<div class="abs" style="left:288.8px;top:838.7px;width:1592px;height:1px;background:#ebeef5"></div>
<div class="t" style="left:329px;width:300px;text-align:center;top:806.14px;font-size:17.5px;color:#606266;letter-spacing:0.5px;transform:scaleY(1.1)">1558423</div>
<div class="t" style="left:710px;width:300px;text-align:center;top:806.14px;font-size:17.5px;color:#606266;letter-spacing:0.5px;transform:scaleY(1.1)">104</div>
<div class="t" style="left:1090px;width:300px;text-align:center;top:806.14px;font-size:17.5px;color:#606266;letter-spacing:0.5px;transform:scaleY(1.1)">1</div>
<div class="t" style="left:1393px;width:300px;text-align:center;top:806.14px;font-size:17.5px;color:#606266;letter-spacing:0.5px;transform:scaleY(1.1)">2025-10-17 04:02:16</div>
<div class="t" style="left:1618px;width:300px;text-align:center;top:806.14px;font-size:17.5px;color:#606266;letter-spacing:0.5px;transform:scaleY(1.1)">2025-10-17 04:02:15</div>
<div class="t" style="left:947.5px;top:872px;font-size:17.5px;color:#606266;">共 597 条</div>
<div class="abs" style="left:1044px;top:859px;width:160px;height:40px;border:1px solid #dcdfe6;border-radius:4px;background:#fff"></div>
<div class="t" style="left:1060px;top:872px;font-size:17.5px;color:#606266;">10条/页</div>
<svg class="abs" style="left:1174px;top:875px" width="14" height="8" viewBox="0 0 14 8"><path d="M1 1l6 6 6-6" fill="none" stroke="#a8abb2" stroke-width="1.3"/></svg>
<div class="abs" style="left:1224px;top:859px;width:40px;height:40px;background:#f4f6f9;border-radius:3px;display:flex;align-items:center;justify-content:center"><svg width="8" height="12" viewBox="0 0 8 12"><path d="M6.5 1 1.5 6l5 5" fill="none" stroke="#a8abb2" stroke-width="1.3"/></svg></div>
<div class="abs" style="left:1274px;top:859px;width:40px;height:40px;background:#409eff;border-radius:3px;display:flex;align-items:center;justify-content:center"><span style="font-size:17.5px;line-height:1;color:#fff;font-weight:bold;display:inline-block;transform:translateY(1.5px) scaleY(1.1)">1</span></div>
<div class="abs" style="left:1324px;top:859px;width:40px;height:40px;background:#f0f2f5;border-radius:3px;display:flex;align-items:center;justify-content:center"><span style="font-size:17.5px;line-height:1;color:#303133;font-weight:normal;display:inline-block;transform:translateY(1.5px) scaleY(1.1)">2</span></div>
<div class="abs" style="left:1374px;top:859px;width:40px;height:40px;background:#f0f2f5;border-radius:3px;display:flex;align-items:center;justify-content:center"><span style="font-size:17.5px;line-height:1;color:#303133;font-weight:normal;display:inline-block;transform:translateY(1.5px) scaleY(1.1)">3</span></div>
<div class="abs" style="left:1424px;top:859px;width:40px;height:40px;background:#f0f2f5;border-radius:3px;display:flex;align-items:center;justify-content:center"><span style="font-size:17.5px;line-height:1;color:#303133;font-weight:normal;display:inline-block;transform:translateY(1.5px) scaleY(1.1)">4</span></div>
<div class="abs" style="left:1474px;top:859px;width:40px;height:40px;background:#f0f2f5;border-radius:3px;display:flex;align-items:center;justify-content:center"><span style="font-size:17.5px;line-height:1;color:#303133;font-weight:normal;display:inline-block;transform:translateY(1.5px) scaleY(1.1)">5</span></div>
<div class="abs" style="left:1524px;top:859px;width:40px;height:40px;background:#f0f2f5;border-radius:3px;display:flex;align-items:center;justify-content:center"><span style="font-size:17.5px;line-height:1;color:#303133;font-weight:normal;display:inline-block;transform:translateY(1.5px) scaleY(1.1)">6</span></div>
<div class="abs" style="left:1574px;top:859px;width:40px;height:40px;background:#f0f2f5;border-radius:3px;display:flex;align-items:center;justify-content:center"><svg width="16" height="4" viewBox="0 0 16 4"><circle cx="2" cy="2" r="1.8" fill="#303133"/><circle cx="8" cy="2" r="1.8" fill="#303133"/><circle cx="14" cy="2" r="1.8" fill="#303133"/></svg></div>
<div class="abs" style="left:1624px;top:859px;width:40px;height:40px;background:#f0f2f5;border-radius:3px;display:flex;align-items:center;justify-content:center"><span style="font-size:17.5px;line-height:1;color:#303133;font-weight:normal;display:inline-block;transform:translateY(1.5px) scaleY(1.1)">60</span></div>
<div class="abs" style="left:1674px;top:859px;width:40px;height:40px;background:#f0f2f5;border-radius:3px;display:flex;align-items:center;justify-content:center"><svg width="8" height="12" viewBox="0 0 8 12"><path d="M1.5 1l5 5-5 5" fill="none" stroke="#303133" stroke-width="1.3"/></svg></div>
<div class="t" style="left:1739.5px;top:872px;font-size:17.5px;color:#606266;">前往</div>
<div class="abs" style="left:1784px;top:859px;width:70px;height:40px;border:1px solid #dcdfe6;border-radius:4px;background:#fff"></div>
<div class="t" style="left:1784.5px;width:69px;text-align:center;top:870px;font-size:17.5px;color:#606266">1</div>
<div class="t" style="left:1864px;top:872px;font-size:17.5px;color:#606266;">页</div>
<div class="abs" style="left:1910px;top:104.8px;width:8px;height:750.7px;border-radius:4px;background:#d4d6da"></div>
<div class="abs" style="left:1870px;top:415px;width:50px;height:49.7px;background:#409eff;border-radius:6px 0 0 6px"></div>
<svg class="abs" style="left:1884.7px;top:428px;overflow:visible" width="20" height="20" viewBox="-10 -10 20 20"><path fill="none" stroke="#fff" stroke-width="1.3" stroke-linejoin="round" d="M-2.01 -5.23 L-1.41 -7.26 L1.41 -7.26 L2.01 -5.23 L3.52 -4.35 L5.58 -4.85 L7.00 -2.41 L5.53 -0.88 L5.53 0.88 L7.00 2.41 L5.58 4.85 L3.52 4.35 L2.01 5.23 L1.41 7.26 L-1.41 7.26 L-2.01 5.23 L-3.52 4.35 L-5.58 4.85 L-7.00 2.41 L-5.53 0.88 L-5.53 -0.88 L-7.00 -2.41 L-5.58 -4.85 L-3.52 -4.35Z"/><circle cx="0" cy="0" r="2.9" fill="none" stroke="#fff" stroke-width="1.3"/></svg>
<svg class="abs" style="left:0;top:0;pointer-events:none" width="1920" height="921"><g fill="rgba(255,255,255,0.12)" stroke="rgba(0,0,0,0.05)" stroke-width="1" font-size="54.3" font-weight="bold" font-family="Liberation Sans">
<g transform="translate(54,38.5) rotate(43.3)"><text x="0" y="0">www.qingfengyrnw.com</text><text x="197" y="60.7" font-weight="500">清风源码</text></g>
<g transform="translate(743.9,41.7) rotate(43.3)"><text x="0" y="0">www.qingfengyrnw.com</text><text x="197" y="60.7" font-weight="500">清风源码</text></g>
<g transform="translate(1435,40.6) rotate(43.3)"><text x="0" y="0">www.qingfengyrnw.com</text><text x="197" y="60.7" font-weight="500">清风源码</text></g>
<g transform="translate(53.4,705.3) rotate(43.3)"><text x="0" y="0">www.qingfengyrnw.com</text><text x="197" y="60.7" font-weight="500">清风源码</text></g>
<g transform="translate(744.5,708.2) rotate(43.3)"><text x="0" y="0">www.qingfengyrnw.com</text><text x="197" y="60.7" font-weight="500">清风源码</text></g>
<g transform="translate(1435.6,707.1) rotate(43.3)"><text x="0" y="0">www.qingfengyrnw.com</text><text x="197" y="60.7" font-weight="500">清风源码</text></g>
</g></svg>
</body></html>
